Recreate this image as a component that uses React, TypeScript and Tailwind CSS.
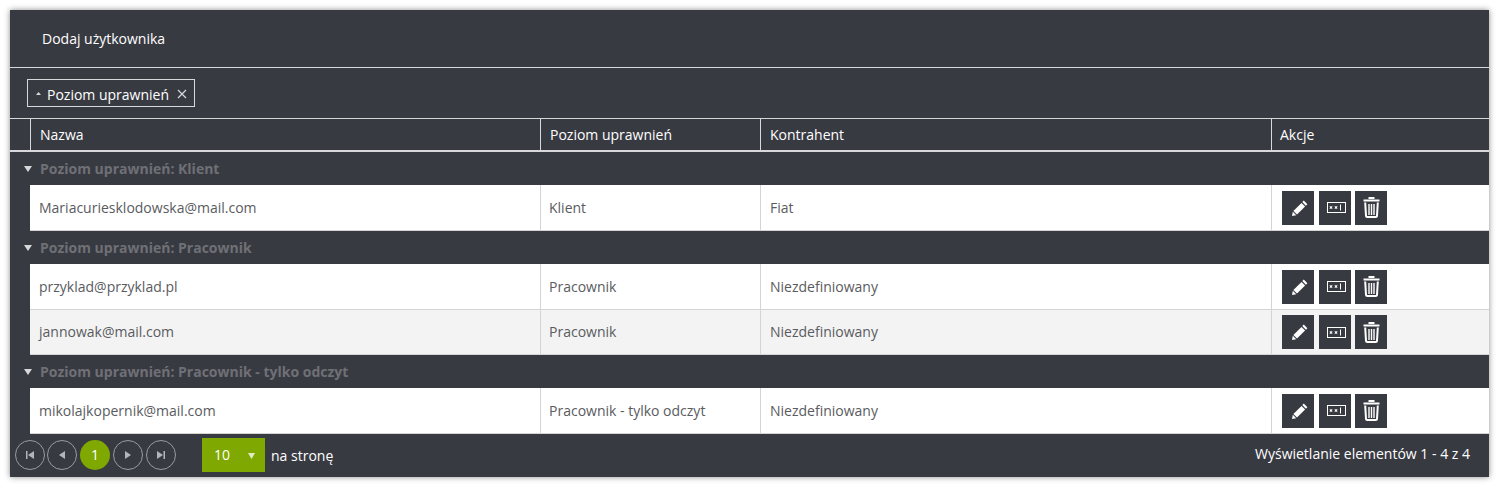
import type React from "react";

interface Row {
  name: string;
  level: string;
  company: string;
  alt?: boolean;
}

interface Group {
  title: string;
  rows: Row[];
}

const groups: Group[] = [
  {
    title: "Poziom uprawnień: Klient",
    rows: [{ name: "Mariacuriesklodowska@mail.com", level: "Klient", company: "Fiat" }],
  },
  {
    title: "Poziom uprawnień: Pracownik",
    rows: [
      { name: "przyklad@przyklad.pl", level: "Pracownik", company: "Niezdefiniowany" },
      { name: "jannowak@mail.com", level: "Pracownik", company: "Niezdefiniowany", alt: true },
    ],
  },
  {
    title: "Poziom uprawnień: Pracownik - tylko odczyt",
    rows: [{ name: "mikolajkopernik@mail.com", level: "Pracownik - tylko odczyt", company: "Niezdefiniowany" }],
  },
];

const PencilIcon = () => (
  <svg width="16" height="16" viewBox="0 0 16 16" fill="#fff" className="ml-[3px]">
    <path d="M11.8 0.6 15.4 4.2 13.9 5.7 10.3 2.1Z" />
    <path d="M9.5 2.9 13.1 6.5 5 14.6 1.4 11Z" />
    <path d="M0.8 11.8 4.2 15.2 0 16Z" />
  </svg>
);

const PasswordIcon = () => (
  <svg width="20" height="13" viewBox="0 0 20 13" fill="none" className="ml-[3px]">
    <rect x="0.5" y="1.5" width="18" height="10" stroke="#fff" />
    <path d="M4 5v3M2.700 5.700l2.600 1.600M5.300 5.700 2.700 7.300M9 5v3M7.700 5.700l2.600 1.600M10.300 5.700 7.700 7.300" stroke="#fff" strokeWidth="1" />
    <rect x="13" y="3.500" width="1" height="6" fill="#fff" />
  </svg>
);

const TrashIcon = () => (
  <svg width="17" height="21" viewBox="0 0 17 21" fill="none" stroke="#fff">
    <path d="M5.500 1h6" strokeWidth="2" />
    <path d="M0.500 3.500h16" strokeWidth="2" />
    <path d="M2.200 5.500 3 19a1.200 1.200 0 0 0 1.200 1h8.600a1.200 1.200 0 0 0 1.200-1l0.800-13.500" strokeWidth="2" />
    <path d="M6 7v11M8.500 7v11M11 7v11" strokeWidth="1.400" />
  </svg>
);

const ActionButton = ({ children }: { children: React.ReactNode }) => (
  <button className="flex h-[34px] w-8 items-center justify-center bg-[#383a42]">{children}</button>
);

const PagerButton = ({ children }: { children: React.ReactNode }) => (
  <button className="flex h-[30px] w-[30px] items-center justify-center rounded-full border border-[#9a9ba0] text-[#b4b5b8]">
    {children}
  </button>
);

const GroupRow = ({ title }: { title: string }) => (
  <div className="flex h-[33px] items-center bg-[#383a42] pl-[14px] text-[14px] font-bold text-[#6f7075]">
    <svg width="8" height="6" viewBox="0 0 8 6" className="mr-[8px]" fill="#d8d8da">
      <path d="M0 0h8L4 6Z" />
    </svg>
    {title}
  </div>
);

const DataRow = ({ row }: { row: Row }) => (
  <div className={`flex bg-[#383a42] pl-5 ${row.alt ? "h-[45px]" : "h-[46px]"}`}>
    <div
      className={`flex flex-1 border-b border-[#d4d4d4] text-[14px] text-[#5a5b60] ${
        row.alt ? "bg-[#f3f3f3]" : "bg-white"
      }`}
    >
      <div className={`flex w-[511px] items-center border-r border-[#d4d4d4] pl-[9px] ${row.alt ? "pb-[2px]" : ""}`}>{row.name}</div>
      <div className={`flex w-[220px] items-center border-r border-[#d4d4d4] pl-[8px] ${row.alt ? "pb-[2px]" : ""}`}>{row.level}</div>
      <div className={`flex w-[511px] items-center border-r border-[#d4d4d4] pl-[9px] ${row.alt ? "pb-[2px]" : ""}`}>{row.company}</div>
      <div className="flex flex-1 items-center pl-[10px]">
        <ActionButton>
          <PencilIcon />
        </ActionButton>
        <div className="ml-[5px]">
          <ActionButton>
            <PasswordIcon />
          </ActionButton>
        </div>
        <div className="ml-1">
          <ActionButton>
            <TrashIcon />
          </ActionButton>
        </div>
      </div>
    </div>
  </div>
);

export default function App() {
  return (
    <div className="h-[487px] bg-white p-[10px] font-['Open_Sans',sans-serif]">
      <div className="flex h-[467px] flex-col overflow-hidden bg-[#383a42] text-white shadow-[0_0_6px_rgba(0,0,0,0.45)]">
        <div className="flex h-[58px] items-center border-b border-[#d8d8da] pl-8 text-[14px]">Dodaj użytkownika</div>

        <div className="flex h-[51px] items-center border-b border-[#d8d8da] pl-[17px]">
          <div className="flex h-7 w-[168px] items-center border border-[#d8d8da] pl-[8px] text-[14px]">
            <svg width="5" height="3" viewBox="0 0 5 3" className="mr-[6px]" fill="#d8d8da">
              <path d="M0 3h5L2.500 0Z" />
            </svg>
            <span className="mt-[3px]">Poziom uprawnień</span>
            <svg width="10" height="10" viewBox="0 0 10 10" className="ml-[8px] mt-[1px]" stroke="#d8d8da" strokeWidth="1.200">
              <path d="M1 1l8 8M9 1l-8 8" />
            </svg>
          </div>
        </div>

        <div className="flex h-[33px] border-b-2 border-[#d8d8da] text-[14px]">
          <div className="w-[21px] border-r border-[#d8d8da]" />
          <div className="flex w-[510px] items-center border-r border-[#d8d8da] pl-[9px]">Nazwa</div>
          <div className="flex w-[220px] items-center border-r border-[#d8d8da] pl-[9px]">Poziom uprawnień</div>
          <div className="flex w-[511px] items-center border-r border-[#d8d8da] pl-[9px]">Kontrahent</div>
          <div className="flex flex-1 items-center pl-[8px]">Akcje</div>
        </div>

        {groups.map((group) => (
          <div key={group.title}>
            <GroupRow title={group.title} />
            {group.rows.map((row) => (
              <DataRow key={row.name} row={row} />
            ))}
          </div>
        ))}

        <div className="flex flex-1 items-center pb-px pl-[5px] pr-[19px]">
          <div className="flex items-center gap-[3px] pb-[1px]">
            <div className="mr-[-1px]">
              <PagerButton>
                <svg width="8" height="8" viewBox="0 0 8 8" fill="currentColor">
                  <path d="M0 0h1.500v8H0ZM8 0v8L2 4Z" />
                </svg>
              </PagerButton>
            </div>
            <PagerButton>
              <svg width="6" height="8" viewBox="0 0 6 8" fill="currentColor">
                <path d="M6 0v8L0 4Z" />
              </svg>
            </PagerButton>
            <div className="flex h-[30px] w-[30px] items-center justify-center rounded-full bg-[#7fa800] text-[14px]">1</div>
            <PagerButton>
              <svg width="6" height="8" viewBox="0 0 6 8" fill="currentColor">
                <path d="M0 0v8l6-4Z" />
              </svg>
            </PagerButton>
            <PagerButton>
              <svg width="8" height="8" viewBox="0 0 8 8" fill="currentColor">
                <path d="M8 0H6.500v8H8ZM0 0v8l6-4Z" />
              </svg>
            </PagerButton>
          </div>
          <div className="ml-[26px] flex h-[34px] w-[63px] items-center bg-[#7fa800] pb-[2px] pl-[12px] text-[14px]">
            10
            <svg width="7" height="6" viewBox="0 0 7 6" className="ml-[18px] mt-[3px]" fill="#e3ebc4">
              <path d="M0 0h7L3.500 6Z" />
            </svg>
          </div>
          <span className="ml-[6px] text-[14px]">na stronę</span>
          <span className="mb-[3px] ml-auto text-[14px]">Wyświetlanie elementów 1 - 4 z 4</span>
        </div>
      </div>
    </div>
  );
}
